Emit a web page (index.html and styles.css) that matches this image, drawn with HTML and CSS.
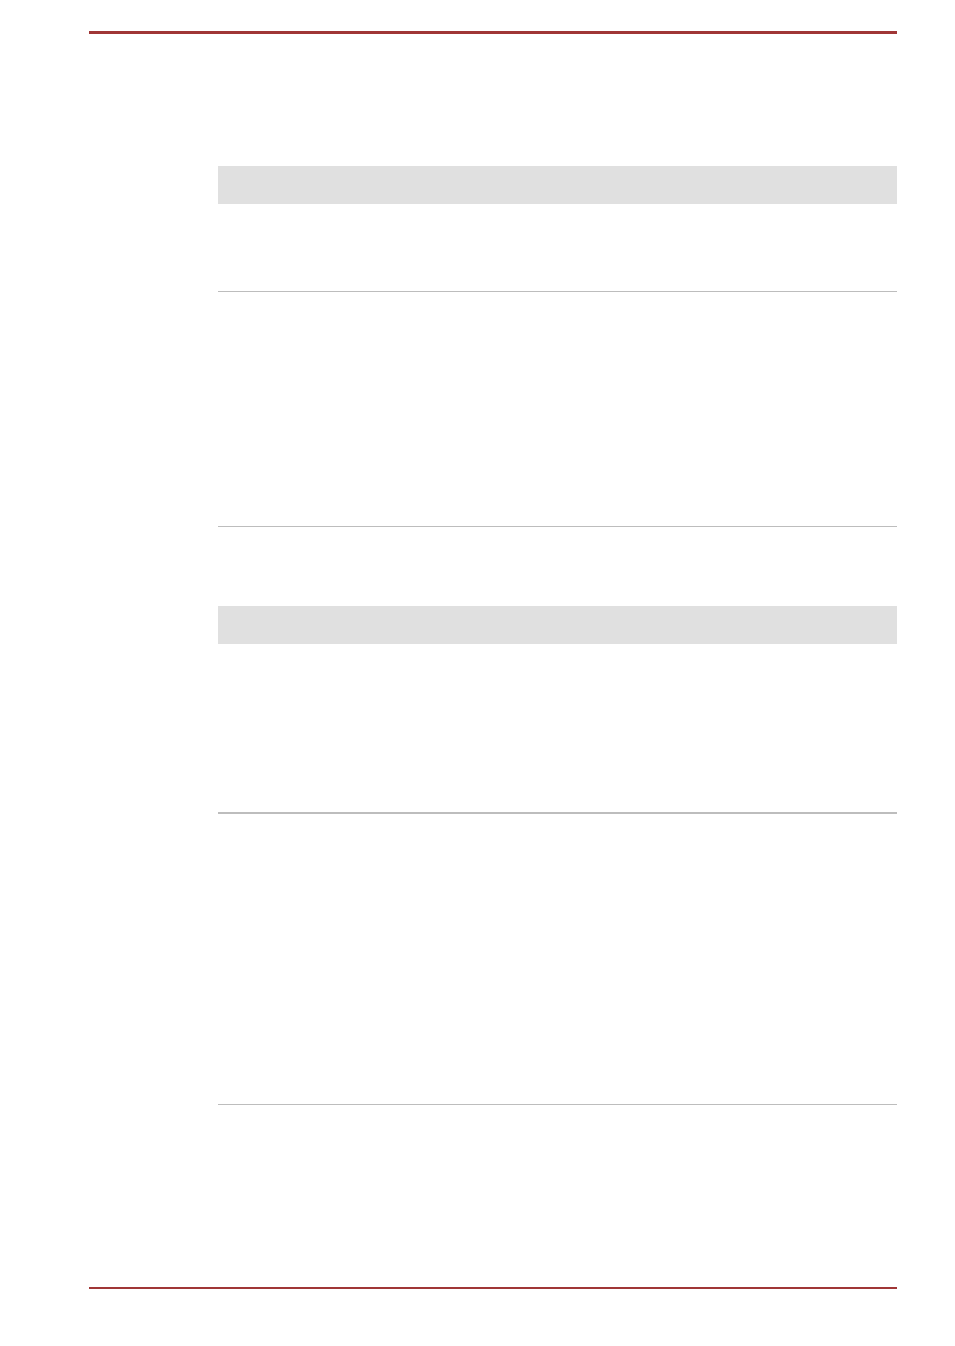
FILE: index.html
```html
<!DOCTYPE html>
<html lang="en">

<head>
    <meta charset="UTF-8">
    <meta name="viewport" content="width=device-width, initial-scale=1.0">
    <title>Page</title>
    <link rel="stylesheet" href="styles.css">
</head>

<body>
    <div class="page">
        <div class="rule rule-top"></div>

        <div class="content">
            <!-- first table -->
            <div class="spec-table first">
                <div class="table-head"></div>
                <div class="table-row row-a"></div>
                <div class="table-row row-b"></div>
            </div>

            <!-- second table -->
            <div class="spec-table second">
                <div class="table-head"></div>
                <div class="table-row row-c"></div>
                <div class="table-row row-d"></div>
            </div>
        </div>

        <div class="rule rule-bottom"></div>
    </div>
</body>

</html>
```

FILE: styles.css
```css
* {
    box-sizing: border-box;
}

body {
    font-family: 'Liberation Sans', Arial, sans-serif;
    margin: 0;
    padding: 0;
    background-color: white;
}

.page {
    width: 955px;
    height: 1346px;
    padding-top: 31px;
}

.rule {
    margin-left: 89px;
    width: 808px;
    background-color: #a03636;
}

.rule-top {
    height: 3px;
}

.rule-bottom {
    height: 2px;
    margin-top: 182px;
}

.content {
    margin-left: 218px;
    width: 679px;
}

.spec-table.first {
    margin-top: 132px;
}

.spec-table.second {
    margin-top: 79px;
}

.table-head {
    height: 38px;
    background-color: #e0e0e0;
}

.table-row {
    border-bottom: 1px solid #bdbdbd;
}

.row-a {
    height: 88px;
}

.row-b {
    height: 235px;
}

.row-c {
    height: 170px;
    border-bottom-width: 2px;
}

.row-d {
    height: 291px;
}
```
